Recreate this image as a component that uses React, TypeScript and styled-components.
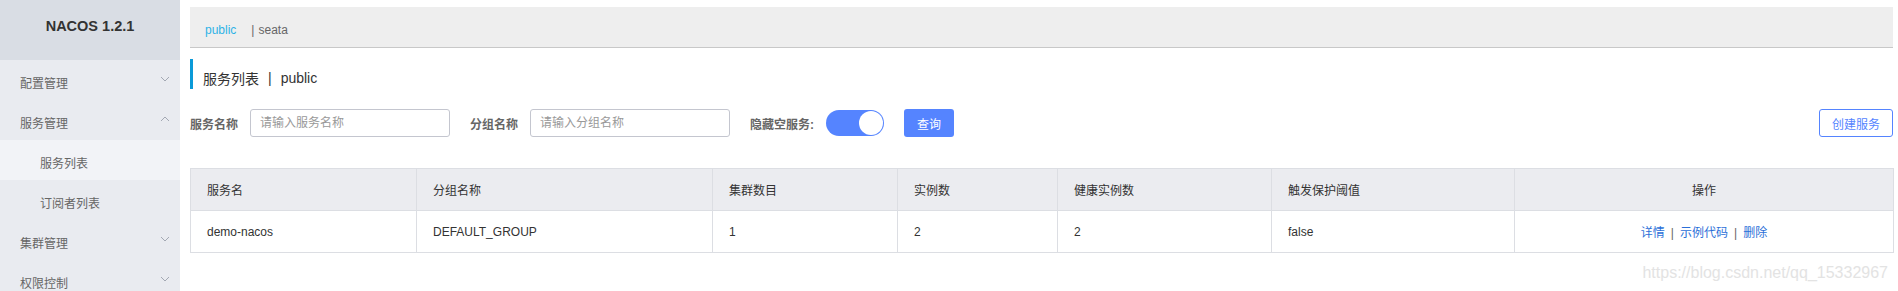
import { createGlobalStyle, styled } from "styled-components";

const GlobalStyle = createGlobalStyle`
  body {
    margin: 0;
    font-family: "Liberation Sans", "Noto Sans CJK SC", sans-serif;
    font-size: 12px;
    color: #333;
    background: #fff;
  }
`;

interface MenuItem {
  label: string;
  sub?: boolean;
  active?: boolean;
  arrow?: "up" | "down";
}

const menu: Array<MenuItem> = [
  { label: "配置管理", arrow: "down" },
  { label: "服务管理", arrow: "up" },
  { label: "服务列表", sub: true, active: true },
  { label: "订阅者列表", sub: true },
  { label: "集群管理", arrow: "down" },
  { label: "权限控制", arrow: "down" },
];

const columns = [
  { title: "服务名", width: 226 },
  { title: "分组名称", width: 296 },
  { title: "集群数目", width: 185 },
  { title: "实例数", width: 160 },
  { title: "健康实例数", width: 214 },
  { title: "触发保护阈值", width: 243 },
  { title: "操作", width: 379, center: true },
];

const rows = [["demo-nacos", "DEFAULT_GROUP", "1", "2", "2", "false"]];

function Chevron({ dir }: { dir: "up" | "down" }) {
  return (
    <svg width="10" height="6" viewBox="0 0 10 6">
      <polyline
        points={dir === "down" ? "1,1 5,5 9,1" : "1,5 5,1 9,5"}
        fill="none"
        stroke="#a3a8b3"
        strokeWidth="1"
      />
    </svg>
  );
}

function App() {
  return (
    <Page>
      <GlobalStyle />
      <Sidebar>
        <Brand>NACOS 1.2.1</Brand>
        {menu.map((item) => (
          <MenuRow key={item.label} $sub={item.sub} $active={item.active}>
            <span>{item.label}</span>
            {item.arrow && <Chevron dir={item.arrow} />}
          </MenuRow>
        ))}
      </Sidebar>
      <Main>
        <NamespaceBar>
          <NsActive>public</NsActive>
          <NsSep>|</NsSep>
          <NsItem>seata</NsItem>
        </NamespaceBar>
        <PageTitle>
          服务列表<TitleSep>|</TitleSep>public
        </PageTitle>
        <SearchRow>
          <Label>服务名称</Label>
          <Input placeholder="请输入服务名称" />
          <Label>分组名称</Label>
          <Input placeholder="请输入分组名称" />
          <Label>隐藏空服务:</Label>
          <Switch>
            <Knob />
          </Switch>
          <PrimaryButton>查询</PrimaryButton>
          <OutlineButton>创建服务</OutlineButton>
        </SearchRow>
        <Table>
          <colgroup>
            {columns.map((c) => (
              <col key={c.title} style={{ width: c.width }} />
            ))}
          </colgroup>
          <thead>
            <tr>
              {columns.map((c) => (
                <Th key={c.title} $center={c.center}>
                  {c.title}
                </Th>
              ))}
            </tr>
          </thead>
          <tbody>
            {rows.map((r) => (
              <tr key={r[0]}>
                {r.map((cell, i) => (
                  <Td key={i}>{cell}</Td>
                ))}
                <Td $center>
                  <Link>详情</Link>
                  <LinkSep>|</LinkSep>
                  <Link>示例代码</Link>
                  <LinkSep>|</LinkSep>
                  <Link>删除</Link>
                </Td>
              </tr>
            ))}
          </tbody>
        </Table>
        <Watermark>https://blog.csdn.net/qq_15332967</Watermark>
      </Main>
    </Page>
  );
}

export default App;

const Page = styled.div`
  display: flex;
  width: 1898px;
  height: 291px;
  overflow: hidden;
`;

const Sidebar = styled.div`
  width: 180px;
  flex-shrink: 0;
  background: #e9ebf0;
`;

const Brand = styled.div`
  height: 60px;
  box-sizing: border-box;
  padding-bottom: 8px;
  display: flex;
  align-items: center;
  justify-content: center;
  background: #d9dde4;
  font-weight: bold;
  font-size: 14.5px;
  color: #333;
`;

const MenuRow = styled.div<{ $sub?: boolean; $active?: boolean }>`
  height: 40px;
  box-sizing: border-box;
  display: flex;
  align-items: center;
  justify-content: space-between;
  padding: 4px 10px 0 ${(p) => (p.$sub ? "40px" : "20px")};
  background: ${(p) => (p.$active ? "#f2f3f7" : "transparent")};
  color: #666;
  font-size: 12px;
  & svg {
    margin-top: -6px;
  }
`;

const Main = styled.div`
  flex: 1;
  min-width: 0;
  padding: 7px 5px 0 10px;
`;

const NamespaceBar = styled.div`
  height: 40px;
  box-sizing: content-box;
  display: flex;
  align-items: center;
  padding: 0 0 0 15px;
  background: #eeeeee;
  border-bottom: 1px solid #c8c8c8;
  font-size: 12px;
  & > span {
    margin-top: 6px;
  }
`;

const NsActive = styled.span`
  color: #2eb3e6;
`;

const NsSep = styled.span`
  margin: 0 4px 0 15px;
  color: #666;
`;

const NsItem = styled.span`
  color: #666;
`;

const PageTitle = styled.div`
  margin-top: 11px;
  height: 30px;
  box-sizing: border-box;
  border-left: 3px solid #0a9ad8;
  padding: 8px 0 0 10px;
  display: flex;
  align-items: center;
  font-size: 14px;
  color: #333;
`;

const TitleSep = styled.span`
  margin: 0 9px;
`;

const SearchRow = styled.div`
  margin-top: 20px;
  height: 28px;
  display: flex;
  align-items: center;
`;

const Label = styled.span`
  font-weight: bold;
  font-size: 12px;
  color: #666;
  margin-right: 12px;
`;

const Input = styled.input`
  width: 200px;
  height: 28px;
  box-sizing: border-box;
  border: 1px solid #c4c6cf;
  border-radius: 3px;
  padding: 0 9px;
  margin-right: 20px;
  font-family: inherit;
  font-size: 12px;
  outline: none;
  &::placeholder {
    color: #999;
  }
`;

const Switch = styled.div`
  width: 58px;
  height: 26px;
  box-sizing: border-box;
  border-radius: 13px;
  background: #5584ff;
  display: flex;
  align-items: center;
  justify-content: flex-end;
  padding-right: 1px;
  margin-right: 20px;
`;

const Knob = styled.div`
  width: 24px;
  height: 24px;
  border-radius: 50%;
  background: #fff;
`;

const PrimaryButton = styled.button`
  width: 50px;
  height: 28px;
  border: none;
  border-radius: 3px;
  background: #5584ff;
  color: #fff;
  font-family: inherit;
  font-size: 12px;
`;

const OutlineButton = styled.button`
  margin-left: auto;
  width: 74px;
  height: 28px;
  border: 1px solid #5584ff;
  border-radius: 3px;
  background: #fff;
  color: #5584ff;
  font-family: inherit;
  font-size: 12px;
`;

const Table = styled.table`
  margin-top: 31px;
  width: 100%;
  table-layout: fixed;
  border-collapse: collapse;
  border: 1px solid #dcdee3;
`;

const Th = styled.th<{ $center?: boolean }>`
  height: 42px;
  box-sizing: border-box;
  padding: 0 16px;
  background: #ebecf0;
  border: 1px solid #dcdee3;
  font-weight: normal;
  font-size: 12px;
  color: #333;
  text-align: ${(p) => (p.$center ? "center" : "left")};
`;

const Td = styled.td<{ $center?: boolean }>`
  height: 42px;
  box-sizing: border-box;
  padding: 0 16px;
  border: 1px solid #dcdee3;
  font-size: 12px;
  color: #333;
  text-align: ${(p) => (p.$center ? "center" : "left")};
`;

const Link = styled.a`
  color: #2b6fd8;
  cursor: pointer;
`;

const LinkSep = styled.span`
  margin: 0 6px;
  color: #666;
`;

const Watermark = styled.div`
  margin-top: 11px;
  padding-right: 5px;
  text-align: right;
  font-size: 16px;
  line-height: 18px;
  color: #e3e3e3;
`;
